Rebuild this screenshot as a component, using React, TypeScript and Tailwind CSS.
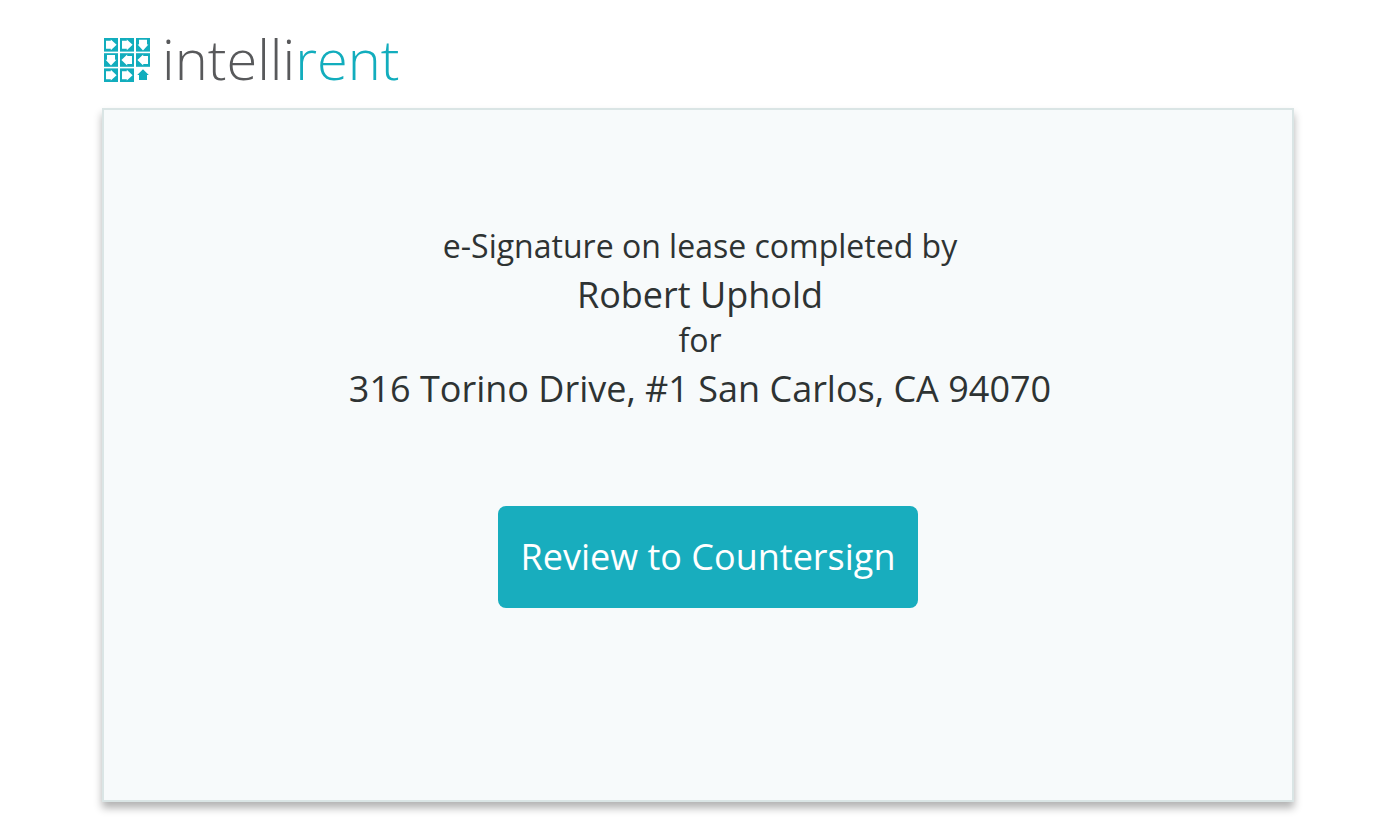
const RIGHT = 'M2 2.8H6.8V1.4L12.6 6.8L6.8 12.2V10.8H2Z';

// rotation of the arrow in each tile, row by row
const tiles = [0, 0, 90, 90, 180, 180, 0, 0];

const LogoMark = () => (
  <svg viewBox="0 0 46 44" className="w-[46px] h-[44px]" aria-hidden="true">
    {tiles.map((angle, i) => (
      <g key={i} transform={`translate(${(i % 3) * 16} ${Math.floor(i / 3) * 15.2})`}>
        <rect width="14" height="13.6" fill="#12adbd" />
        <path d={RIGHT} fill="#fff" transform={`rotate(${angle} 7 6.8)`} />
      </g>
    ))}
    <path d="M39 31.2L44.8 37H43V42H35V37H33.2Z" fill="#12adbd" />
  </svg>
);

const Logo = () => (
  <div className="flex items-start gap-3 pl-0.5">
    <LogoMark />
    <div className="font-light text-[56px] leading-[40px] text-[#58595b]">
      intelli<span className="text-[#12adbd]">rent</span>
    </div>
  </div>
);

const App = () => {
  return (
    <div className="min-h-screen bg-white pt-[38px] pb-[26px] pl-[102px] pr-[92px] font-['Open_Sans',sans-serif]">
      <header className="mb-[26px]">
        <Logo />
      </header>
      <main className="flex flex-col items-center border-2 border-[#dae5e5] bg-[#f7fafb] pt-[114px] pb-[192px] shadow-[0_6px_8px_rgba(0,0,0,0.3)]">
        <div className="pl-1 text-center text-[32px] leading-[44px] text-[#2e3333]">
          <p>e-Signature on lease completed by</p>
          <p className="pt-1 text-[36px] leading-[46px]">Robert Uphold</p>
          <p>for</p>
          <p className="pt-1 text-[36px] leading-[46px]">316 Torino Drive, #1 San Carlos, CA 94070</p>
        </div>
        <div className="pl-5 pt-[94px]">
          <button
            type="button"
            className="h-[102px] w-[420px] rounded-lg bg-[#18adbe] text-[36px] leading-[50px] text-white"
          >
            Review to Countersign
          </button>
        </div>
      </main>
    </div>
  );
};

export default App;
